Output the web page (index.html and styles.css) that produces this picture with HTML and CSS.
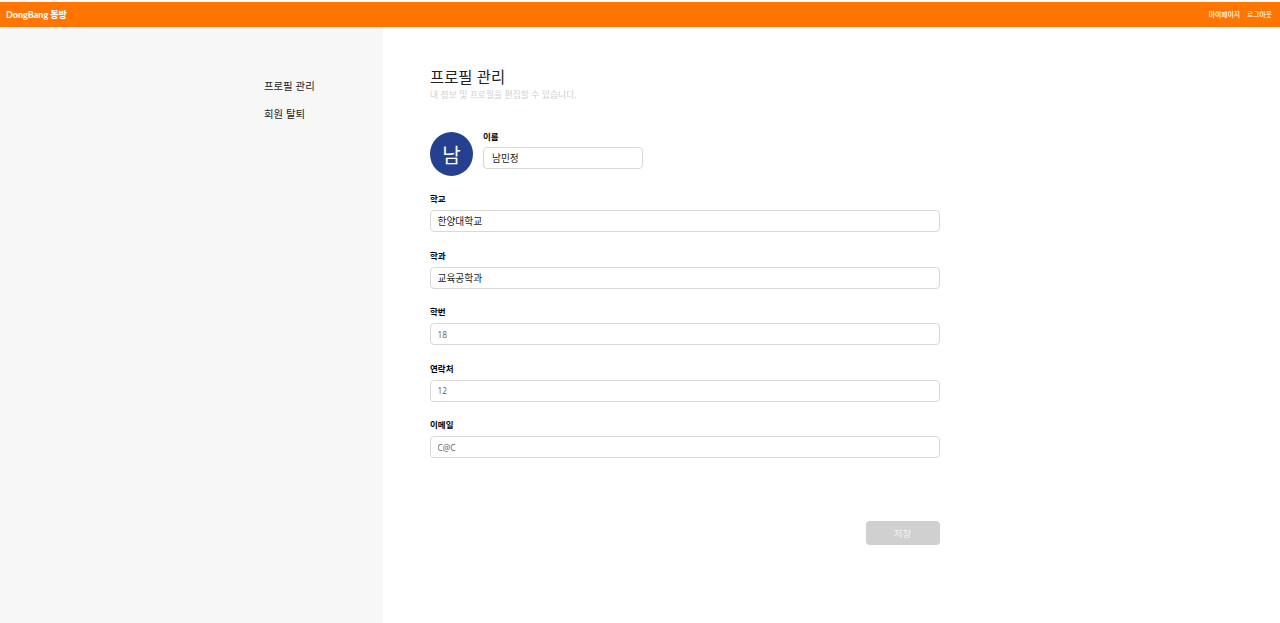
FILE: index.html
```html
<!DOCTYPE html>
<html lang="ko">
<head>
<meta charset="utf-8">
<title>DongBang 동방</title>
<link rel="stylesheet" href="styles.css">
</head>
<body>
<header class="topbar">
  <a class="logo">DongBang 동방</a>
  <nav class="topnav"><a>마이페이지</a><a>로그아웃</a></nav>
</header>
<div class="layout">
  <aside class="sidebar">
    <ul class="side-menu">
      <li>프로필 관리</li>
      <li>회원 탈퇴</li>
    </ul>
  </aside>
  <main class="content">
    <h1 class="title">프로필 관리</h1>
    <p class="subtitle">내 정보 및 프로필을 편집할 수 있습니다.</p>
    <div class="name-row">
      <div class="avatar">남</div>
      <div class="name-field">
        <label class="label">이름</label>
        <input class="input name-input" value="남민정">
      </div>
    </div>
    <div class="field"><label class="label">학교</label><input class="input" value="한양대학교"></div>
    <div class="field"><label class="label">학과</label><input class="input" value="교육공학과"></div>
    <div class="field"><label class="label">학번</label><input class="input muted" value="18"></div>
    <div class="field"><label class="label">연락처</label><input class="input muted" value="12"></div>
    <div class="field"><label class="label">이메일</label><input class="input muted" value="C@C"></div>
    <div class="actions"><button class="save" type="button">저장</button></div>
  </main>
</div>
</body>
</html>
```
FILE: styles.css
```css
* { box-sizing: border-box; }
html, body { height: 100%; }
body {
  margin: 0;
  padding-top: 2px;
  background: #fff;
  font-family: "Noto Sans CJK KR", "Noto Sans", sans-serif;
  color: #111;
  display: flex;
  flex-direction: column;
  overflow: hidden;
}
.topbar {
  height: 25px;
  flex: none;
  background: #ff7500;
  color: #fff;
  display: flex;
  align-items: center;
  justify-content: space-between;
  padding: 0 8px 1px 6px;
}
.logo { font-family: "Lato", "Noto Sans CJK KR", sans-serif; font-size: 9px; font-weight: 900; }
.topnav { display: flex; gap: 7px; font-size: 6.8px; font-weight: 500; }
.layout { flex: 1; display: flex; min-height: 0; }
.sidebar {
  width: 383px;
  flex: none;
  background: #f7f7f7;
  padding: 51px 0 0 264px;
}
.side-menu { list-style: none; margin: 0; padding: 0; display: flex; flex-direction: column; gap: 12px; }
.side-menu li { font-size: 10.4px; line-height: 16px; color: #222; }
.content { flex: 1; padding: 37px 0 0 47px; }
.title { margin: 0 0 1px; font-size: 15.4px; font-weight: 400; line-height: 24px; color: #222; }
.subtitle { margin: 0; font-size: 8.8px; line-height: 12px; color: #d0d0d0; }
.name-row { display: flex; gap: 10px; margin-top: 31px; align-items: flex-start; }
.avatar {
  width: 43px;
  height: 44px;
  border-radius: 50%;
  background: #254090;
  color: #fff;
  font-size: 20px;
  display: flex;
  align-items: center;
  justify-content: center;
}
.label { display: block; font-size: 8.5px; font-weight: 700; line-height: 9px; color: #000; margin-bottom: 7px; }
.name-field .label { margin-bottom: 6px; }
.input {
  display: block;
  width: 509.5px;
  height: 22px;
  border: 1px solid #d8d8d8;
  border-radius: 4px;
  padding: 0 6.5px;
  background: #fff;
  font-family: inherit;
  font-size: 9.7px;
  color: #222;
  outline: none;
}
.name-input { width: 160px; height: 21.5px; padding: 0 8px; }
.muted { font-size: 8.3px; color: #5c6068; font-family: "Open Sans", "Noto Sans", sans-serif; }
.field { width: 509.5px; height: 39.5px; margin-top: 17px; }
.name-row + .field { margin-top: 18px; }
.actions { width: 509.5px; display: flex; justify-content: flex-end; margin-top: 61px; }
.save {
  width: 74px;
  height: 24px;
  border: 0;
  border-radius: 4px;
  background: #d0d0d0;
  color: #f4f4f4;
  font-family: inherit;
  font-size: 9.5px;
}
```
